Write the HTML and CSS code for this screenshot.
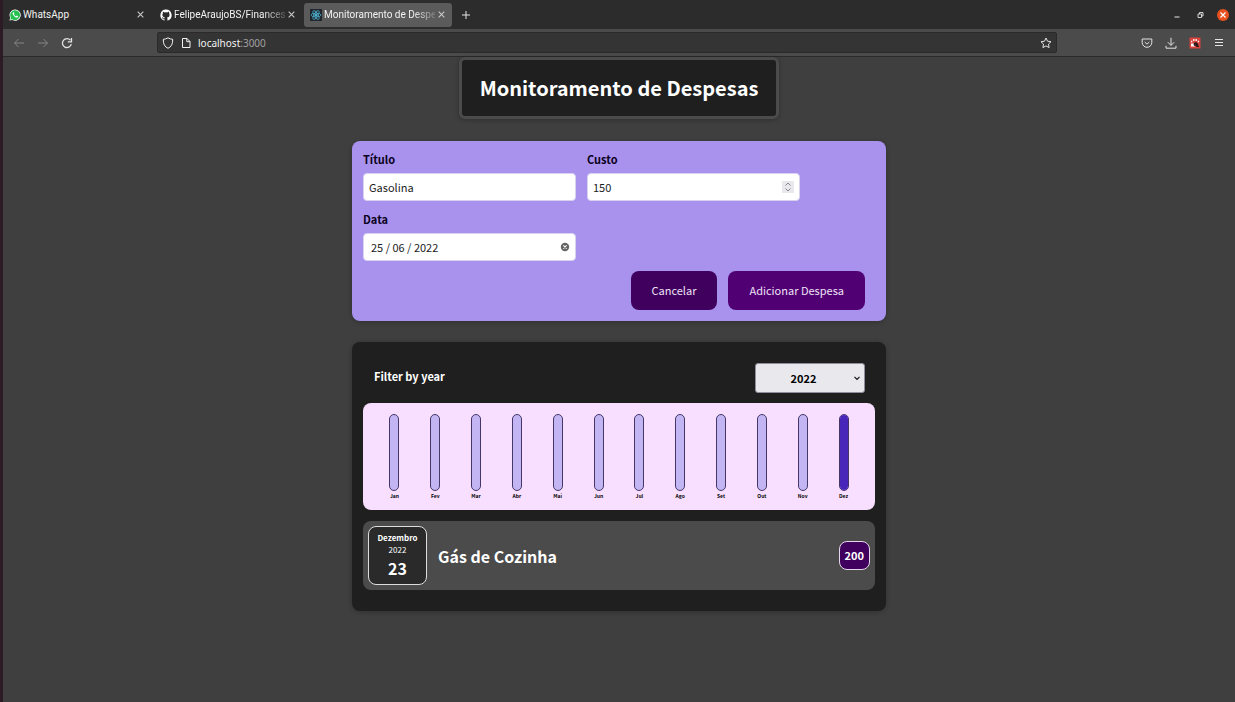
FILE: index.html
```html
<!DOCTYPE html>
<html lang="pt-BR">
<head>
<meta charset="utf-8">
<meta name="viewport" content="width=device-width, initial-scale=1">
<title>Monitoramento de Despesas</title>
<link rel="stylesheet" href="styles.css">
</head>
<body>
<div class="window">
  <header class="chrome">
    <div class="tabs">
      <div class="tab">
        <svg class="favicon" viewBox="0 0 12 12" aria-hidden="true"><path d="M.4 11.6 1.2 8.700A5.600 5.600 0 1 1 3.300 10.900z" fill="#fff"/><path d="M1.300 10.700 1.900 8.600A4.900 4.900 0 1 1 3.400 10.200z" fill="#25c04f"/><path d="M4.200 3.200c-.8.6-.8 1.700 0 2.800 1 1.600 2.400 2.600 3.600 2.600.9-.1 1.400-.6 1.300-1.300L7.700 6.600l-.7.8C6 7 5.300 6.300 4.900 5.500l.5-.7-.6-1.500z" fill="#fff"/></svg>
        <span class="tab-title">WhatsApp</span>
        <button class="icon-button tab-close" aria-label="Fechar WhatsApp"><svg viewBox="0 0 8 8"><path d="m1.500 1.500 5 5m0-5-5 5"/></svg></button>
      </div>
      <div class="tab">
        <svg class="favicon" viewBox="0 0 16 16" aria-hidden="true"><path fill="#fff" d="M8 .7a7.500 7.500 0 0 0-2.400 14.600c.4.1.5-.2.5-.4v-1.300c-2.100.5-2.500-1-2.500-1-.4-.9-.9-1.100-.9-1.100-.7-.5.1-.5.1-.5.7.1 1.100.8 1.100.8.7 1.200 1.800.8 2.200.6.1-.5.3-.8.5-1-1.700-.2-3.400-.9-3.400-3.700 0-.8.3-1.500.7-2-.1-.2-.3-1 .1-2 0 0 .7-.2 2.100.8a7 7 0 0 1 3.800 0c1.400-1 2.100-.8 2.100-.8.4 1 .2 1.800.1 2 .5.500.7 1.200.7 2 0 2.900-1.700 3.500-3.400 3.700.3.200.5.700.5 1.400v2.100c0 .2.100.500.5.400A7.500 7.500 0 0 0 8 .7z"/></svg>
        <span class="tab-title tab-title-fade">FelipeAraujoBS/Finances</span>
        <button class="icon-button tab-close" aria-label="Fechar FelipeAraujoBS"><svg viewBox="0 0 8 8"><path d="m1.500 1.500 5 5m0-5-5 5"/></svg></button>
      </div>
      <div class="tab tab-active">
        <svg class="favicon" viewBox="0 0 12 12" aria-hidden="true"><path d="M0 0h12v12H0z" fill="#20262d"/><g fill="none" stroke="#4aa9c6" stroke-width=".8"><ellipse cx="6" cy="6" rx="5" ry="1.900"/><ellipse cx="6" cy="6" rx="5" ry="1.900" transform="rotate(60 6 6)"/><ellipse cx="6" cy="6" rx="5" ry="1.900" transform="rotate(120 6 6)"/></g><circle cx="6" cy="6" r="1" fill="#61dafb"/></svg>
        <span class="tab-title tab-title-fade">Monitoramento de Despe</span>
        <button class="icon-button tab-close" aria-label="Fechar Monitoramento"><svg viewBox="0 0 8 8"><path d="m1.500 1.500 5 5m0-5-5 5"/></svg></button>
      </div>
      <button class="icon-button new-tab" aria-label="Nova aba"><svg viewBox="0 0 10 10"><path d="M5 1v8M1 5h8"/></svg></button>
      <div class="window-controls">
        <button class="icon-button" aria-label="Minimizar"><svg viewBox="0 0 12 12"><path d="M3.500 8h5"/></svg></button>
        <button class="icon-button" aria-label="Restaurar"><svg viewBox="0 0 12 12"><path d="M4 5h3.500v3.500H4zM5.500 5V3.500H9V7H7.500" stroke-width=".9"/></svg></button>
        <button class="icon-button window-close" aria-label="Fechar"><svg viewBox="0 0 12 12"><path d="m3.500 3.500 5 5m0-5-5 5" stroke-width="1.200"/></svg></button>
      </div>
    </div>
    <div class="toolbar">
      <nav class="nav-buttons">
        <button class="icon-button" aria-label="Voltar" disabled><svg viewBox="0 0 12 12"><path d="M11 6H1.500M5.500 2l-4 4 4 4"/></svg></button>
        <button class="icon-button" aria-label="Avançar" disabled><svg viewBox="0 0 12 12"><path d="M1 6h9.500M6.500 2l4 4-4 4"/></svg></button>
        <button class="icon-button" aria-label="Recarregar"><svg viewBox="0 0 12 12"><path d="M10.300 7.200A4.500 4.500 0 1 1 9.400 3.200M10.500 1v3.800H6.800" stroke-width="1.300"/></svg></button>
      </nav>
      <div class="address">
        <svg class="icon" viewBox="0 0 12 12" aria-hidden="true"><path d="M6 .8c1.500 1 3 1.400 4.700 1.500C10.900 6.500 9.500 9.800 6 11.300 2.500 9.800 1.100 6.500 1.300 2.300 3 2.200 4.500 1.800 6 .8z"/></svg>
        <svg class="icon" viewBox="0 0 12 12" aria-hidden="true"><path d="M2.500 1.500h4.500l3 3v6H2.500zM6.800 1.500v3.200H10"/></svg>
        <span class="url">localhost<span class="port">:3000</span></span>
        <button class="icon-button bookmark" aria-label="Favoritar"><svg viewBox="0 0 12 12"><path d="m6 1 1.500 3.200 3.500.5-2.500 2.400.6 3.500L6 8.900l-3.100 1.700.6-3.500L1 4.700l3.500-.5z"/></svg></button>
      </div>
      <div class="tools">
        <button class="icon-button" aria-label="Pocket"><svg viewBox="0 0 12 12"><path d="M1.200 2h9.600v3.500a4.800 4.800 0 0 1-9.600 0zM3.700 5 6 7.200 8.300 5"/></svg></button>
        <button class="icon-button" aria-label="Downloads"><svg viewBox="0 0 12 12"><path d="M6 .8v7.400M2.800 5.200 6 8.400l3.200-3.200M1 8.800v2.400h10V8.800"/></svg></button>
        <button class="icon-button" aria-label="Extensão"><svg viewBox="0 0 12 12"><path d="M.5.5h11v11H.5z" fill="#d9443c" stroke="none"/><path d="M2.600 3.800v1.500M4.800 2v2M7.200 2v2M9.400 3.800v1.500" stroke="#fff" stroke-width="1.300"/><path d="M2 6.500h4v3H2z" fill="#fff" stroke="none"/><path d="M4.500 7c1-2.500 3.500-2.500 4.500 0l1 3H7.500L6.500 8.500 5 9z" fill="#2b1c1c" stroke="none"/></svg></button>
        <button class="icon-button" aria-label="Menu"><svg viewBox="0 0 12 12"><path d="M2 2.500h8M2 5.500h8M2 8.500h8"/></svg></button>
      </div>
    </div>
  </header>

  <main class="page">
    <h1 class="page-title">Monitoramento de Despesas</h1>

    <form class="expense-form" onsubmit="return false">
      <div class="fields">
        <div class="field">
          <label for="title">Título</label>
          <div class="control"><input id="title" type="text" value="Gasolina"></div>
        </div>
        <div class="field">
          <label for="cost">Custo</label>
          <div class="control">
            <input id="cost" type="number" value="150">
            <button type="button" class="spinner" aria-label="Ajustar custo"><svg viewBox="0 0 12 12"><path d="m3.500 4.500 2.500-2.500 2.500 2.500m-5 3L6 10l2.500-2.500" fill="none" stroke="#888"/></svg></button>
          </div>
        </div>
        <div class="field">
          <label for="date">Data</label>
          <div class="control control-date">
            <input id="date" type="text" value="25 / 06 / 2022">
            <button type="button" class="clear" aria-label="Limpar data"><svg viewBox="0 0 10 10"><circle cx="5" cy="5" r="4.200" fill="#666"/><path d="m3.400 3.400 3.200 3.200m0-3.200L3.400 6.600" fill="none" stroke="#fff" stroke-width="1.100"/></svg></button>
          </div>
        </div>
      </div>
      <div class="actions">
        <button type="button" class="action action-cancel">Cancelar</button>
        <button type="submit" class="action">Adicionar Despesa</button>
      </div>
    </form>

    <section class="expenses">
      <div class="filter">
        <label for="year">Filter by year</label>
        <div class="year-control">
          <select id="year"><option>2022</option></select>
          <svg class="chevron" viewBox="0 0 8 8" aria-hidden="true"><path d="M1.500 2.800 4 5.300l2.500-2.500" fill="none" stroke="#111" stroke-width="1.200"/></svg>
        </div>
      </div>
      <div class="chart">
        <div class="month"><div class="bar"></div><span>Jan</span></div>
        <div class="month"><div class="bar"></div><span>Fev</span></div>
        <div class="month"><div class="bar"></div><span>Mar</span></div>
        <div class="month"><div class="bar"></div><span>Abr</span></div>
        <div class="month"><div class="bar"></div><span>Mai</span></div>
        <div class="month"><div class="bar"></div><span>Jun</span></div>
        <div class="month"><div class="bar"></div><span>Jul</span></div>
        <div class="month"><div class="bar"></div><span>Ago</span></div>
        <div class="month"><div class="bar"></div><span>Set</span></div>
        <div class="month"><div class="bar"></div><span>Out</span></div>
        <div class="month"><div class="bar"></div><span>Nov</span></div>
        <div class="month"><div class="bar"><div class="bar-fill" style="height: 100%"></div></div><span>Dez</span></div>
      </div>
      <article class="expense">
        <time class="date" datetime="2022-12-23">
          <span class="date-month">Dezembro</span>
          <span class="date-year">2022</span>
          <span class="date-day">23</span>
        </time>
        <h2>Gás de Cozinha</h2>
        <div class="price">200</div>
      </article>
    </section>
  </main>
</div>
</body>
</html>
```

FILE: styles.css
```css
* {
  box-sizing: border-box;
}

body {
  margin: 0;
  background: #3f3f3f;
  font-family: "Noto Sans CJK JP", "Noto Sans", sans-serif;
  font-size: 11px;
}

button,
input,
select {
  margin: 0;
  font: inherit;
}

.window {
  min-height: 100vh;
  border-left: 3px solid #2c1a24;
}

/* Browser chrome */
.chrome {
  font-family: "Noto Sans", sans-serif;
  font-size: 10px;
  color: #f2f2f2;
  background: #4b4b4b;
  border-bottom: 1px solid #2a2a2a;
}

.icon-button {
  display: flex;
  align-items: center;
  justify-content: center;
  padding: 0;
  border: 0;
  background: none;
  color: #e4e4e4;
}

.icon-button:disabled {
  color: #858585;
}

.icon-button svg,
.icon {
  display: block;
  width: 12px;
  height: 12px;
  flex: none;
  fill: none;
  stroke: currentColor;
  stroke-width: 1;
}

.tabs {
  display: flex;
  align-items: center;
  height: 29px;
  padding-right: 6px;
  background: #2c2c2c;
}

.tab {
  display: flex;
  align-items: center;
  gap: 2px;
  width: 148px;
  height: 24px;
  padding: 0 6px;
  margin-right: 3px;
  border-radius: 3px;
}

.tab:nth-child(2) {
  margin-right: 2px;
}

.tab-active {
  background: #5b5b5b;
}

.favicon {
  width: 12px;
  height: 12px;
  flex: none;
}

.tab-title {
  flex: 1;
  min-width: 0;
  overflow: hidden;
  font-family: Roboto, sans-serif;
  white-space: nowrap;
}

.tab-title-fade {
  mask-image: linear-gradient(to right, #000 80%, rgba(0, 0, 0, 0.2) 100%);
}

.tab .tab-close {
  color: #c8c8c8;
}

.tab-close svg {
  width: 9px;
  height: 9px;
}

.new-tab {
  margin-left: 6px;
}

.new-tab svg {
  width: 10px;
  height: 10px;
}

.window-controls {
  display: flex;
  align-items: center;
  gap: 11px;
  margin-left: auto;
}

.window-close {
  border-radius: 50%;
  background: #e8501f;
  color: #fff;
}

.toolbar {
  display: flex;
  align-items: center;
  height: 27px;
  padding: 0 10px;
}

.nav-buttons {
  display: flex;
  gap: 12px;
  width: 144px;
}

.address {
  display: flex;
  align-items: center;
  gap: 6px;
  flex: 1;
  height: 21px;
  padding: 0 4px;
  border: 1px solid #2a2a2a;
  border-radius: 2px;
  background: #343434;
}

.bookmark {
  margin-left: auto;
}

.port {
  color: #a0a0a0;
}

.tools {
  display: flex;
  justify-content: flex-end;
  gap: 12px;
  width: 168px;
}

/* Page */
.page {
  display: flex;
  flex-direction: column;
  align-items: center;
}

.page-title {
  margin: 0 0 22px;
  padding: 14px 18px;
  border: 3px solid #4b4b4b;
  border-radius: 6px;
  background: #1f1f1f;
  box-shadow: 0 1px 5px rgba(0, 0, 0, 0.25);
  color: #fff;
  font-size: 20px;
  line-height: 28px;
}

.expense-form,
.expenses {
  width: 100%;
  max-width: 534px;
  padding: 10px 11px;
  border-radius: 8px;
  box-shadow: 0 1px 5px rgba(0, 0, 0, 0.25);
}

.expense-form {
  margin-bottom: 21px;
  padding-bottom: 11px;
  background: #a892ee;
}

.fields {
  display: flex;
  flex-wrap: wrap;
  gap: 10px 11px;
}

.field {
  width: 213px;
}

.field label {
  display: block;
  margin-bottom: 5px;
  color: #0b0020;
  font-weight: bold;
  line-height: 17px;
}

.control {
  display: flex;
  align-items: center;
  height: 28px;
  padding: 0 5px;
  border: 1px solid #d8d2f0;
  border-radius: 4px;
  background: #fff;
}

.control-date {
  padding-left: 7px;
}

.control input {
  flex: 1;
  min-width: 0;
  padding: 0;
  border: 0;
  outline: 0;
  background: none;
  color: #1c1c1c;
  appearance: textfield;
}

.spinner,
.clear {
  padding: 0;
  border: 0;
  background: none;
}

.spinner {
  background: #e9e9ed;
}

.spinner svg {
  display: block;
  width: 12px;
  height: 12px;
}

.clear svg {
  display: block;
  width: 10px;
  height: 10px;
}

.actions {
  display: flex;
  justify-content: flex-end;
  gap: 11px;
  padding: 10px 10px 0 0;
}

.action {
  padding: 11px 21px;
  border: 0;
  border-radius: 8px;
  background: #510074;
  color: #efe3f7;
  line-height: 17px;
}

.action-cancel {
  background: #40005d;
}

.expenses {
  padding-top: 21px;
  padding-bottom: 21px;
  background: #1f1f1f;
}

.filter {
  display: flex;
  justify-content: space-between;
  align-items: flex-start;
  margin-bottom: 10px;
  padding: 0 10px 0 11px;
  color: #fff;
  font-weight: bold;
}

.filter label {
  padding-top: 5px;
  line-height: 17px;
}

.year-control {
  position: relative;
}

.year-control select {
  display: block;
  width: 110px;
  height: 30px;
  padding: 0 13px 0 0;
  border: 1px solid #8f8f9d;
  border-radius: 3px;
  background: #e9e9ed;
  color: #000;
  font-weight: bold;
  text-align: center;
  text-align-last: center;
  appearance: none;
}

.chevron {
  position: absolute;
  top: 11px;
  right: 4px;
  width: 8px;
  height: 8px;
  pointer-events: none;
}

.chart {
  display: flex;
  padding: 11px 11px 10px;
  border-radius: 8px;
  background: #f8dfff;
}

.month {
  display: flex;
  flex: 1;
  flex-direction: column;
  align-items: center;
  color: #000;
  font-size: 5px;
  font-weight: bold;
  line-height: 9px;
}

.bar {
  width: 10px;
  height: 77px;
  overflow: hidden;
  border: 1px solid #453869;
  border-radius: 5px;
  background: #c3b4f3;
}

.bar-fill {
  background: #4826b9;
}

.expense {
  display: flex;
  align-items: center;
  margin-top: 11px;
  padding: 5px;
  border-radius: 8px;
  background: #4b4b4b;
  color: #fff;
}

.date {
  display: flex;
  flex-direction: column;
  align-items: center;
  justify-content: center;
  width: 59px;
  height: 59px;
  border: 1px solid #ddd;
  border-radius: 8px;
  background: #2a2a2a;
}

.date-month {
  font-size: 8px;
  font-weight: bold;
  line-height: 12px;
}

.date-year {
  font-size: 8px;
  line-height: 12px;
}

.date-day {
  font-size: 16px;
  font-weight: bold;
  line-height: 24px;
}

.expense h2 {
  flex: 1;
  margin: 0 11px;
  font-size: 16px;
  line-height: 24px;
}

.price {
  padding: 5px;
  border: 1px solid #e6d5ee;
  border-radius: 8px;
  background: #40005d;
  font-weight: bold;
  line-height: 17px;
}
```
